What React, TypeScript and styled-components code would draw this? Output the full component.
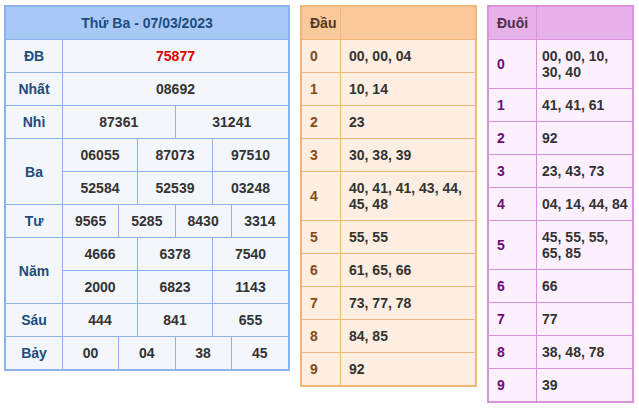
import React from "react";
import styled, { createGlobalStyle } from "styled-components";

const GlobalStyle = createGlobalStyle`
  body {
    margin: 0;
    background: #fff;
    font-family: "Liberation Sans", Arial, sans-serif;
  }
`;

const Page = styled.div`
  display: flex;
  align-items: flex-start;
  gap: 10px;
  padding: 5px 4px;
`;

type Tone = {
  border: string;
  head: string;
  cell: string;
  label: string;
  headText: string;
};

const blue: Tone = {
  border: "#8db2ec",
  head: "#a8c8f6",
  cell: "#f3f6fb",
  label: "#1d4c7c",
  headText: "#1d4c7c",
};

const orange: Tone = {
  border: "#f0b779",
  head: "#fac99b",
  cell: "#fdeee1",
  label: "#8a4a0d",
  headText: "#4d3a28",
};

const purple: Tone = {
  border: "#d893da",
  head: "#e6b1e9",
  cell: "#fdf0fd",
  label: "#6c0c7c",
  headText: "#4b2f4c",
};

const Table = styled.table<{ $tone: Tone; $width: number }>`
  width: ${(p) => p.$width}px;
  table-layout: fixed;
  border-collapse: separate;
  border-spacing: 0;
  border: 2px solid ${(p) => p.$tone.border};
  font-size: 14px;
  font-weight: bold;
  line-height: 16px;
  color: #333;
  th {
    background: ${(p) => p.$tone.head};
    color: ${(p) => p.$tone.headText};
    padding: 8px;
    text-align: left;
    border-bottom: 1px solid ${(p) => p.$tone.border};
    border-right: 1px solid ${(p) => p.$tone.border};
  }
  td {
    background: ${(p) => p.$tone.cell};
    padding: 8px;
    border-bottom: 1px solid ${(p) => p.$tone.border};
    border-right: 1px solid ${(p) => p.$tone.border};
    vertical-align: middle;
  }
  th:last-child,
  td:last-child {
    border-right: none;
  }
  tr:last-child td {
    border-bottom: none;
  }
`;

const ResultTable = styled(Table)`
  th {
    text-align: center;
    border-right: none;
  }
  td {
    text-align: center;
    padding: 8px 2px;
  }
`;

const Label = styled.td<{ $tone: Tone }>`
  && {
    color: ${(p) => p.$tone.label};
    border-right: 1px solid ${(p) => p.$tone.border};
  }
`;

const Special = styled.td`
  && {
    color: #e00000;
  }
`;

const ValueCell = styled.td<{ $pad: string }>`
  && {
    padding: ${(p) => p.$pad};
  }
`;

type Prize = { name: string; rows: string[][] };

const prizes: Prize[] = [
  { name: "ĐB", rows: [["75877"]] },
  { name: "Nhất", rows: [["08692"]] },
  { name: "Nhì", rows: [["87361", "31241"]] },
  {
    name: "Ba",
    rows: [
      ["06055", "87073", "97510"],
      ["52584", "52539", "03248"],
    ],
  },
  { name: "Tư", rows: [["9565", "5285", "8430", "3314"]] },
  {
    name: "Năm",
    rows: [
      ["4666", "6378", "7540"],
      ["2000", "6823", "1143"],
    ],
  },
  { name: "Sáu", rows: [["444", "841", "655"]] },
  { name: "Bảy", rows: [["00", "04", "38", "45"]] },
];

const dau: string[] = [
  "00, 00, 04",
  "10, 14",
  "23",
  "30, 38, 39",
  "40, 41, 41, 43, 44, 45, 48",
  "55, 55",
  "61, 65, 66",
  "73, 77, 78",
  "84, 85",
  "92",
];

const duoi: string[] = [
  "00, 00, 10, 30, 40",
  "41, 41, 61",
  "92",
  "23, 43, 73",
  "04, 14, 44, 84",
  "45, 55, 55, 65, 85",
  "66",
  "77",
  "38, 48, 78",
  "39",
];

const Results = () => (
  <ResultTable $tone={blue} $width={286}>
    <colgroup>
      <col style={{ width: 57 }} />
      {Array.from({ length: 12 }).map((_, i) => (
        <col key={i} />
      ))}
    </colgroup>
    <thead>
      <tr>
        <th colSpan={13}>Thứ Ba - 07/03/2023</th>
      </tr>
    </thead>
    <tbody>
      {prizes.map((p) =>
        p.rows.map((row, ri) => (
          <tr key={p.name + ri}>
            {ri === 0 && (
              <Label $tone={blue} rowSpan={p.rows.length}>
                {p.name}
              </Label>
            )}
            {row.map((v) =>
              p.name === "ĐB" ? (
                <Special key={v} colSpan={12 / row.length}>
                  {v}
                </Special>
              ) : (
                <td key={v} colSpan={12 / row.length}>
                  {v}
                </td>
              )
            )}
          </tr>
        ))
      )}
    </tbody>
  </ResultTable>
);

const Lotos = ({
  title,
  items,
  tone,
  width,
  firstCol,
  pad,
}: {
  title: string;
  items: string[];
  tone: Tone;
  width: number;
  firstCol: number;
  pad: string;
}) => (
  <Table $tone={tone} $width={width}>
    <colgroup>
      <col style={{ width: firstCol }} />
      <col />
    </colgroup>
    <thead>
      <tr>
        <th>{title}</th>
        <th />
      </tr>
    </thead>
    <tbody>
      {items.map((v, i) => (
        <tr key={i}>
          <Label $tone={tone}>{i}</Label>
          <ValueCell $pad={pad}>{v}</ValueCell>
        </tr>
      ))}
    </tbody>
  </Table>
);

export default function App() {
  return (
    <>
      <GlobalStyle />
      <Page>
        <Results />
        <Lotos
          title="Đầu"
          items={dau}
          tone={orange}
          width={177}
          firstCol={39}
          pad="8px"
        />
        <Lotos
          title="Đuôi"
          items={duoi}
          tone={purple}
          width={147}
          firstCol={48}
          pad="8px 2px 8px 5px"
        />
      </Page>
    </>
  );
}
